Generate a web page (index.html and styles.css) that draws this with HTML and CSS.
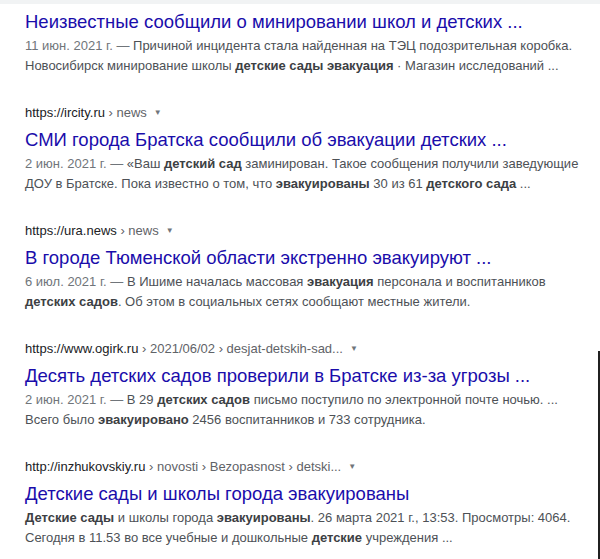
FILE: index.html
```html
<!DOCTYPE html>
<html>
<head>
    <title>детские сады эвакуация - Поиск</title>
    <link rel="stylesheet" href="styles.css">
</head>
<body>
    <div class="top-strip"></div>

    <div class="results">
        <!-- first result is cut off at the top, no url line -->
        <div class="result">
            <a class="result-title" href="#">Неизвестные сообщили о минировании школ и детских ...</a>
            <div class="snippet">
                <span class="date">11 июн. 2021 г. — </span>Причиной инцидента стала найденная на ТЭЦ подозрительная коробка.<br>
                Новосибирск минирование школы <b>детские сады эвакуация</b> · Магазин исследований ...
            </div>
        </div>

        <div class="result">
            <div class="cite">https://ircity.ru<span class="crumbs"> › news</span><span class="arrow">▼</span></div>
            <a class="result-title" href="#">СМИ города Братска сообщили об эвакуации детских ...</a>
            <div class="snippet">
                <span class="date">2 июн. 2021 г. — </span>«Ваш <b>детский сад</b> заминирован. Такое сообщения получили заведующие<br>
                ДОУ в Братске. Пока известно о том, что <b>эвакуированы</b> 30 из 61 <b>детского сада</b> ...
            </div>
        </div>

        <div class="result">
            <div class="cite">https://ura.news<span class="crumbs"> › news</span><span class="arrow">▼</span></div>
            <a class="result-title" href="#">В городе Тюменской области экстренно эвакуируют ...</a>
            <div class="snippet">
                <span class="date">6 июл. 2021 г. — </span>В Ишиме началась массовая <b>эвакуация</b> персонала и воспитанников<br>
                <b>детских садов</b>. Об этом в социальных сетях сообщают местные жители.
            </div>
        </div>

        <div class="result">
            <div class="cite">https://www.ogirk.ru<span class="crumbs"> › 2021/06/02 › desjat-detskih-sad...</span><span class="arrow">▼</span></div>
            <a class="result-title" href="#">Десять детских садов проверили в Братске из-за угрозы ...</a>
            <div class="snippet">
                <span class="date">2 июн. 2021 г. — </span>В 29 <b>детских садов</b> письмо поступило по электронной почте ночью. ...<br>
                Всего было <b>эвакуировано</b> 2456 воспитанников и 733 сотрудника.
            </div>
        </div>

        <div class="result">
            <div class="cite">http://inzhukovskiy.ru<span class="crumbs"> › novosti › Bezopasnost › detski...</span><span class="arrow">▼</span></div>
            <a class="result-title" href="#">Детские сады и школы города эвакуированы</a>
            <div class="snippet">
                <b>Детские сады</b> и школы города <b>эвакуированы</b>. 26 марта 2021 г., 13:53. Просмотры: 4064.<br>
                Сегодня в 11.53 во все учебные и дошкольные <b>детские</b> учреждения ...
            </div>
        </div>
    </div>

    <div class="edge-line"></div>
</body>
</html>
```

FILE: styles.css
```css
/* General body styles */
body {
    font-family: 'Liberation Sans', Arial, sans-serif;
    color: #4d5156;
    background-color: #ffffff;
    margin: 0;
    height: 559px;
    overflow: hidden;
    position: relative;
}

/* thin grey strip left over from the header */
.top-strip {
    height: 4px;
    background-color: #f1f3f4;
}

.results {
    padding: 7px 0 0 25px;
}

.result {
    margin-bottom: 27px;
}

/* url line */
.cite {
    font-size: 13px;
    line-height: 20px;
    color: #202124;
    margin-bottom: 6px;
}

.cite .crumbs {
    color: #5f6368;
}

.cite .arrow {
    font-size: 8px;
    color: #70757a;
    margin-left: 7px;
    vertical-align: 2px;
}

/* result title */
.result-title {
    display: block;
    font-size: 18.5px;
    line-height: 22px;
    color: #1a0dab;
    text-decoration: none;
    margin-bottom: 3px;
}

.result-title:hover {
    text-decoration: underline;
}

.snippet {
    font-size: 13px;
    line-height: 20px;
    color: #4d5156;
    white-space: nowrap;
}

.snippet .date {
    color: #70757a;
}

.snippet b {
    color: #3c4043;
}

/* dark window edge at bottom right */
.edge-line {
    position: absolute;
    right: 0;
    top: 351px;
    bottom: 0;
    width: 2px;
    background-color: #202020;
}
```
